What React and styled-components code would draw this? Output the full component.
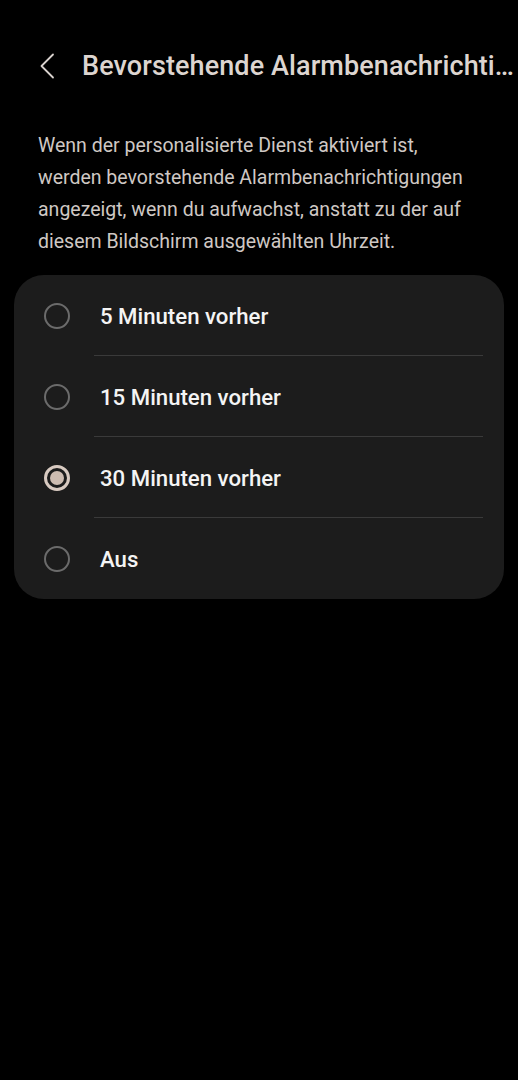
import React from "react";
import styled, { createGlobalStyle } from "styled-components";

const Global = createGlobalStyle`
  html, body { margin: 0; padding: 0; background: #000; }
  body { font-family: Roboto, "Noto Sans", sans-serif; }
`;

const Screen = styled.div`
  width: 518px;
  height: 1080px;
  background: #000;
  overflow: hidden;
  display: flex;
  flex-direction: column;
`;

const Header = styled.header`
  display: flex;
  align-items: center;
  height: 60px;
  margin-top: 36px;
  padding-left: 38px;
  gap: 26px;
`;

const BackButton = styled.button`
  background: none;
  border: 0;
  padding: 0;
  width: 18px;
  height: 26px;
  display: flex;
  align-items: center;
  justify-content: center;
  color: #d9d2ce;
`;

const Title = styled.h1`
  margin: 0;
  flex: 1;
  min-width: 0;
  font-size: 27px;
  font-weight: 500;
  letter-spacing: 0.1px;
  color: #ddd5d0;
  white-space: nowrap;
  overflow: hidden;
  text-overflow: ellipsis;
`;

const Description = styled.p`
  margin: 34px 0 0 38px;
  width: 425px;
  font-size: 19.5px;
  line-height: 32px;
  color: #cfc8c4;
`;

const Card = styled.ul`
  list-style: none;
  margin: 17px 14px 0 14px;
  padding: 0;
  background: #1c1c1c;
  border-radius: 30px;
`;

const Row = styled.li`
  display: flex;
  align-items: center;
  height: 81px;
  padding-left: 30px;
  position: relative;
  &:not(:last-child)::after {
    content: "";
    position: absolute;
    left: 80px;
    right: 21px;
    bottom: 0;
    height: 1px;
    background: #3a3a3a;
  }
`;

const Radio = styled.span`
  width: 26px;
  height: 26px;
  box-sizing: border-box;
  border-radius: 50%;
  border: ${(p) => (p.$checked ? "3px solid #d8cac1" : "2px solid #6b6b6b")};
  display: flex;
  align-items: center;
  justify-content: center;
  flex-shrink: 0;
  &::after {
    content: "";
    display: ${(p) => (p.$checked ? "block" : "none")};
    width: 14px;
    height: 14px;
    border-radius: 50%;
    background: #cdbcb1;
  }
`;

const Label = styled.span`
  margin-left: 30px;
  font-size: 22.2px;
  font-weight: 500;
  color: #f4f4f4;
`;

const options = [
  { label: "5 Minuten vorher" },
  { label: "15 Minuten vorher" },
  { label: "30 Minuten vorher", checked: true },
  { label: "Aus" },
];

export default function App() {
  return (
    <Screen>
      <Global />
      <Header>
        <BackButton aria-label="Zurück">
          <svg width="16" height="26" viewBox="0 0 16 26" fill="none">
            <path d="M14 1.5 L2.5 13 L14 24.5" stroke="currentColor" strokeWidth="1.8" strokeLinecap="round" strokeLinejoin="round" />
          </svg>
        </BackButton>
        <Title>Bevorstehende Alarmbenachrichtigungen</Title>
      </Header>
      <Description>
        Wenn der personalisierte Dienst aktiviert ist, werden bevorstehende Alarmbenachrichtigungen angezeigt, wenn du aufwachst, anstatt zu der auf diesem Bildschirm ausgewählten Uhrzeit.
      </Description>
      <Card>
        {options.map((o) => (
          <Row key={o.label}>
            <Radio $checked={o.checked} />
            <Label>{o.label}</Label>
          </Row>
        ))}
      </Card>
    </Screen>
  );
}
